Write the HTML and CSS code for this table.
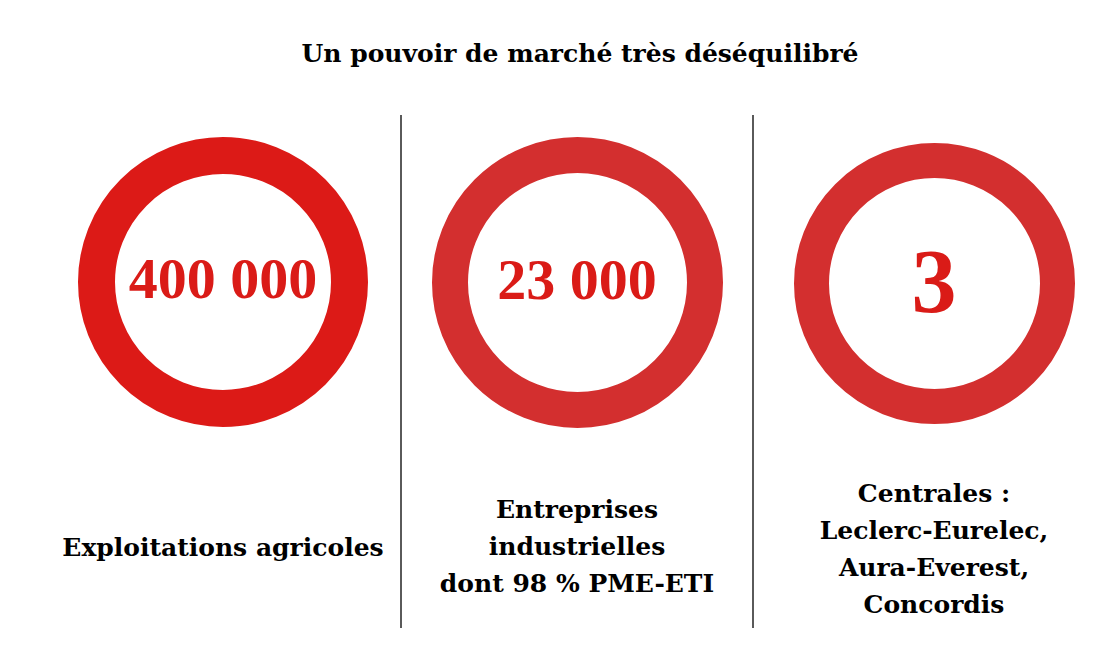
FILE: index.html
```html
<!DOCTYPE html>
<html lang="fr">
<head>
<meta charset="utf-8">
<title>Un pouvoir de marché très déséquilibré</title>
<link rel="stylesheet" href="styles.css">
</head>
<body>
<div class="page">
  <h1 class="title">Un pouvoir de marché très déséquilibré</h1>
  <div class="cols">
    <div class="col">
      <div class="ring ring-strong"><span class="num">400 000</span></div>
      <div class="label">Exploitations agricoles</div>
    </div>
    <div class="col col-sep">
      <div class="ring"><span class="num">23 000</span></div>
      <div class="label label-up">Entreprises<br>industrielles<br>dont 98 % PME-ETI</div>
    </div>
    <div class="col col-sep">
      <div class="ring ring-small"><span class="num num-big">3</span></div>
      <div class="label label-down">Centrales :<br>Leclerc-Eurelec,<br>Aura-Everest,<br>Concordis</div>
    </div>
  </div>
</div>
</body>
</html>
```
FILE: styles.css
```css
html, body {
  margin: 0;
  padding: 0;
  background: #ffffff;
}
.page {
  width: 1068px;
  margin-left: 46px;
  font-family: "DejaVu Serif", "Liberation Serif", serif;
  color: #000;
}
.title {
  margin: 0;
  padding-top: 37px;
  height: 115px;
  box-sizing: border-box;
  text-align: center;
  font-size: 25px;
  font-weight: bold;
  line-height: 34px;
}
.cols {
  display: grid;
  grid-template-columns: 354px 352px 362px;
  height: 513px;
}
.col {
  display: flex;
  flex-direction: column;
  align-items: center;
}
.col-sep {
  border-left: 2px solid #5a5a5a;
}
.ring {
  margin-top: 22px;
  width: 291px;
  height: 291px;
  box-sizing: border-box;
  border: 36px solid #d32f2f;
  border-radius: 50%;
  display: flex;
  align-items: center;
  justify-content: center;
}
.ring-strong {
  border-color: #dc1a17;
  border-width: 37px;
  width: 290px;
  height: 290px;
}
.ring-small {
  margin-top: 28px;
  width: 281px;
  height: 281px;
  border-width: 35px;
}
.num {
  font-family: "Liberation Serif", serif;
  font-weight: bold;
  font-size: 58px;
  color: #da1b17;
  line-height: 1;
  padding-bottom: 6px;
}
.num-big {
  font-size: 90px;
  padding-bottom: 4px;
}
.label {
  flex: 1;
  display: flex;
  align-items: center;
  justify-content: center;
  text-align: center;
  font-size: 25px;
  font-weight: bold;
  line-height: 37px;
  padding-top: 40px;
}
.label-up {
  padding-bottom: 4px;
}
.label-down {
  padding-top: 46px;
}
```
